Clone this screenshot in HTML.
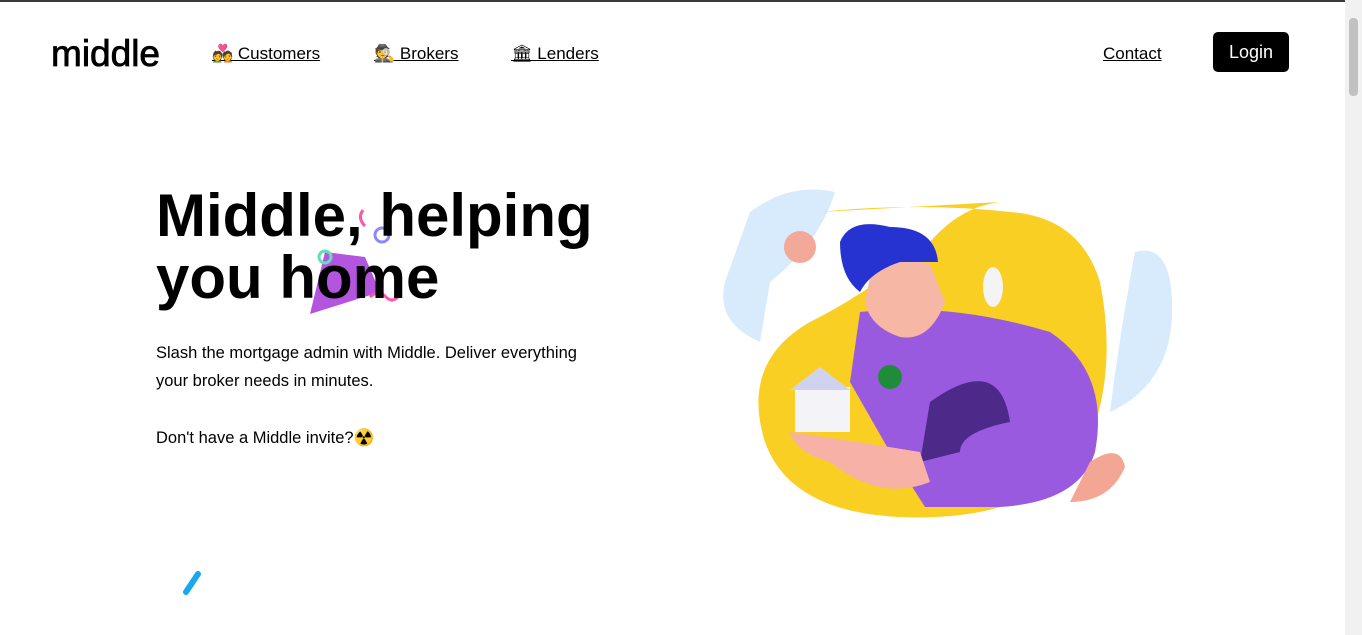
<!DOCTYPE html>
<html><head><meta charset="utf-8"><style>
*{margin:0;padding:0;box-sizing:border-box}
body{width:1362px;height:633px;overflow:hidden;background:#fff;font-family:"Liberation Sans",sans-serif;position:relative;border-top:2px solid #3a3a3a}
.logo{position:absolute;left:51px;top:31px;font:500 37px "Liberation Sans",sans-serif;color:#000;-webkit-text-stroke:0.8px #000}
.nav a{position:absolute;top:42px;font-size:17px;color:#000;text-decoration:underline;white-space:nowrap}
.login{position:absolute;left:1213px;top:30px;width:76px;height:40px;background:#000;color:#fff;border-radius:5px;font-size:18px;text-align:center;line-height:40px}
h1{position:absolute;left:156px;top:183px;font:bold 60px/62px "Liberation Sans",sans-serif;color:#000;z-index:2}
.p{position:absolute;left:156px;top:337px;font-size:16.5px;line-height:28px;color:#000;width:452px}
.q{position:absolute;left:156px;top:427px;font-size:16.5px;color:#000}
.sb{position:absolute;right:0;top:-2px;width:17px;height:635px;background:#f1f1f1}
.sb div{position:absolute;left:4px;top:18px;width:9px;height:78px;background:#c1c1c1;border-radius:4px}
</style></head><body>
<div class="logo">middle</div>
<div class="nav">
<a style="left:212px">💑 Customers</a>
<a style="left:374px">🕵 Brokers</a>
<a style="left:511px">🏛 Lenders</a>
<a style="left:1103px">Contact</a>
</div>
<div class="login">Login</div>
<svg style="position:absolute;left:0;top:0" width="1362" height="633">
<g transform="translate(305,200)">
<path d="M20 50 L60 55 L75 90 L5 112 Z" fill="#b455e0"/>
<circle cx="20" cy="55" r="6" fill="none" stroke="#5ee0b8" stroke-width="3"/>
<circle cx="77" cy="33" r="7" fill="none" stroke="#8a8aff" stroke-width="3"/>
<path d="M58 8 q-6 8 2 16" stroke="#ff55aa" stroke-width="3" fill="none"/>
<path d="M65 95 q8 -8 16 0 q6 6 12 0" stroke="#ff55aa" stroke-width="3" fill="none"/>
</g>
<path d="M186 590 L198 572" stroke="#18a8ee" stroke-width="6" stroke-linecap="round"/>
<path d="M750 210 Q790 180 835 190 Q820 240 770 280 L760 340 Q715 320 725 280 Z" fill="#d7ebfd"/>
<path d="M1135 250 Q1170 240 1172 300 Q1175 380 1110 410 Q1120 330 1135 250 Z" fill="#d7ebfd"/>
<path d="M820 210 Q920 200 1010 210 Q1080 215 1100 280 Q1120 380 1080 460 Q1020 520 900 515 Q790 510 765 440 Q740 360 810 320 Q870 290 930 240 Q960 205 1000 200 Z" fill="#f8cf22"/>
<path d="M860 310 Q950 300 1050 330 Q1110 370 1095 450 Q1080 500 1000 505 L925 505 L890 450 L850 380 Z" fill="#9a5ae0"/>
<path d="M930 400 Q1000 350 1010 420 Q960 430 960 450 L920 460 Z" fill="#4d2a8a"/>
<circle cx="800" cy="245" r="16" fill="#f3a999"/>
<path d="M870 275 Q880 250 930 262 L945 300 Q930 340 900 335 Q870 325 865 300 Z" fill="#f6b8a5"/>
<path d="M840 240 Q850 215 890 225 Q935 225 938 260 L900 260 Q870 270 860 290 Q840 275 840 240 Z" fill="#2733d0"/>
<path d="M790 430 Q860 440 920 450 L930 480 Q880 500 830 460 Q795 450 790 430 Z" fill="#f7b1a6"/>
<rect x="795" y="385" width="55" height="45" fill="#f3f3f8"/>
<path d="M790 388 L820 365 L850 388 Z" fill="#cfd3f0"/>
<circle cx="890" cy="375" r="12" fill="#1f8c3c"/>
<ellipse cx="993" cy="285" rx="10" ry="20" fill="#f4f4f4"/>
<path d="M1090 460 Q1120 440 1125 465 Q1110 500 1070 500 Z" fill="#f4a694"/>
</svg>
<h1>Middle, helping<br>you home</h1>
<div class="p">Slash the mortgage admin with Middle. Deliver everything your broker needs in minutes.</div>
<div class="q">Don't have a Middle invite?☢️</div>
<div class="sb"><div></div></div>
</body></html>
